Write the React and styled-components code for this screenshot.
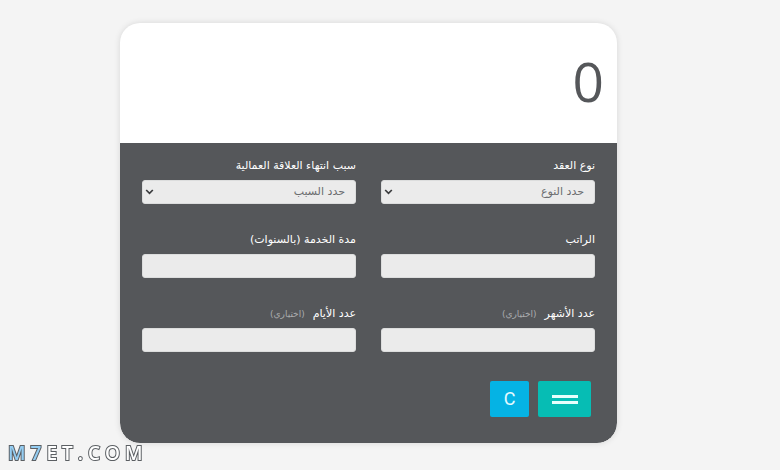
import React, { useState } from "react";
import styled, { createGlobalStyle } from "styled-components";

const GlobalStyle = createGlobalStyle`
  * { box-sizing: border-box; }
  body {
    margin: 0;
    background: #f4f4f4;
    font-family: "DejaVu Sans", "Noto Sans", sans-serif;
  }
`;

const Page = styled.main`
  min-height: 100vh;
  padding: 23px 163px 26px 120px;
`;

const Card = styled.form`
  border-radius: 20px;
  overflow: hidden;
  background: #fff;
  box-shadow: 0 0 6px rgba(0, 0, 0, 0.12);
`;

const Result = styled.output`
  display: flex;
  align-items: center;
  height: 120px;
  padding: 0 13px 4px;
  color: #55575a;
  font: 400 55px/80px "Open Sans", sans-serif;
`;

const Body = styled.div`
  padding: 16px 22px 26px;
  border-radius: 0 0 20px 20px;
  background: #55575a;
`;

const Fields = styled.div`
  display: grid;
  grid-template-columns: 1fr 1fr;
  gap: 29px 25px;
`;

const Field = styled.div`
  display: flex;
  flex-direction: column;
  gap: 7px;
  min-width: 0;
`;

const Label = styled.label`
  display: flex;
  gap: 8px;
  color: #fff;
  font-size: 11px;
  line-height: 14px;
  white-space: nowrap;
`;

const Optional = styled.span`
  color: #aaacae;
  font-size: 9px;
`;

const controlStyle = `
  display: block;
  width: 100%;
  height: 24px;
  margin: 0;
  border: 1px solid #dcdddd;
  border-radius: 3px;
  background: #ebebeb;
  color: #6a6c6f;
  font-family: inherit;
  font-size: 11px;
`;

const Input = styled.input`
  ${controlStyle}
  padding: 0 10px;
`;

const SelectBox = styled.div`
  display: grid;
  align-items: center;

  > * { grid-area: 1 / 1; }
`;

const Select = styled.select`
  ${controlStyle}
  appearance: none;
  padding: 0 10px 2px 20px;
`;

const Chevron = styled.svg`
  justify-self: end;
  margin-left: 3px;
  pointer-events: none;
`;

const Actions = styled.div`
  display: flex;
  gap: 9px;
  margin-top: 29px;
  padding: 0 4px;
`;

const Button = styled.button`
  display: grid;
  place-items: center;
  width: ${(p) => (p.$wide ? 53 : 39)}px;
  height: 36px;
  padding: 0;
  border: 0;
  border-radius: 2px;
  background: ${(p) => (p.$wide ? "#06bdb4" : "#05b3e4")};
  color: #e4faff;
  font: 400 18px/20px Roboto, sans-serif;
  cursor: pointer;
`;

const Watermark = styled.div`
  position: fixed;
  left: 8px;
  bottom: 5px;
  color: #fff;
  font: 600 19px/24px "Open Sans", sans-serif;
  letter-spacing: 5px;
  -webkit-text-stroke: 2px #5b5f63;
  paint-order: stroke fill;
`;

const Accent = styled.span`
  color: #94cdf2;
`;

function TextField({ id, label, optional }) {
  return (
    <Field>
      <Label htmlFor={id}>
        {label}
        {optional && <Optional>(اختياري)</Optional>}
      </Label>
      <Input id={id} name={id} inputMode="decimal" />
    </Field>
  );
}

function SelectField({ id, label, placeholder }) {
  return (
    <Field>
      <Label htmlFor={id}>{label}</Label>
      <SelectBox>
        <Select id={id} name={id}>
          <option value="">{placeholder}</option>
        </Select>
        <Chevron width="9" height="6" viewBox="0 0 9 6" fill="none" aria-hidden="true">
          <path d="M1.2 1 4.5 4.4 7.8 1" stroke="#3b3c3e" strokeWidth="1.7" />
        </Chevron>
      </SelectBox>
    </Field>
  );
}

export default function App() {
  const [result, setResult] = useState("0");

  const calculate = (event) => {
    event.preventDefault();
    const data = new FormData(event.currentTarget);
    const number = (name) => Number(data.get(name)) || 0;
    const years = number("years") + number("months") / 12 + number("days") / 360;
    const award = number("salary") * (Math.min(years, 5) / 2 + Math.max(years - 5, 0));
    setResult(String(Math.round(award)));
  };

  return (
    <>
      <GlobalStyle />
      <Page dir="rtl" lang="ar">
        <Card onSubmit={calculate} onReset={() => setResult("0")}>
          <Result>{result}</Result>
          <Body>
            <Fields>
              <SelectField id="contract" label="نوع العقد" placeholder="حدد النوع" />
              <SelectField id="reason" label="سبب انتهاء العلاقة العمالية" placeholder="حدد السبب" />
              <TextField id="salary" label="الراتب" />
              <TextField id="years" label="مدة الخدمة (بالسنوات)" />
              <TextField id="months" label="عدد الأشهر" optional />
              <TextField id="days" label="عدد الأيام" optional />
            </Fields>
            <Actions>
              <Button type="submit" $wide aria-label="احسب">
                <svg width="26" height="10" viewBox="0 0 26 10" aria-hidden="true">
                  <path d="M0 1h26v3H0zM0 7h26v3H0z" fill="#e6fffc" />
                </svg>
              </Button>
              <Button type="reset">C</Button>
            </Actions>
          </Body>
        </Card>
      </Page>
      <Watermark dir="ltr">
        <Accent>M7</Accent>ET.COM
      </Watermark>
    </>
  );
}
